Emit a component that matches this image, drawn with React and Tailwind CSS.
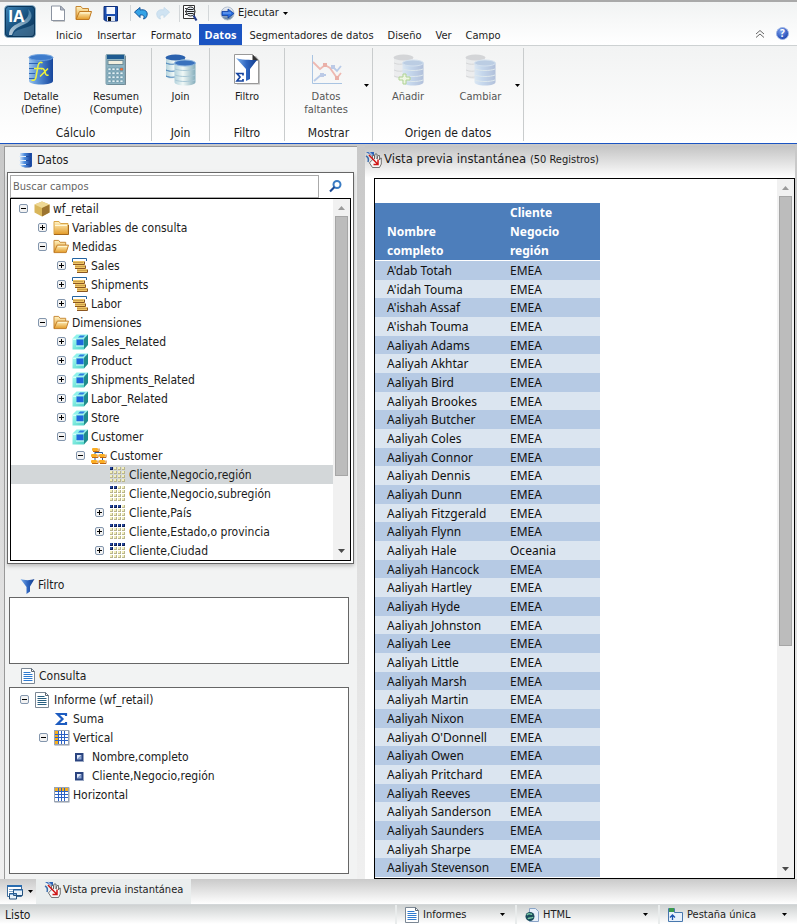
import React from "react";

/* ---------- drawings ---------- */

function Defs() {
  return (
    <svg width="0" height="0" className="absolute" aria-hidden="true">
      <defs>
        <linearGradient id="logo" x1="0" y1="0" x2="1" y2="1">
          <stop offset="0" stopColor="#3f86b8" />
          <stop offset="0.5" stopColor="#17517f" />
          <stop offset="1" stopColor="#0a2f52" />
        </linearGradient>
        <linearGradient id="swoosh" x1="0" y1="1" x2="1" y2="0">
          <stop offset="0" stopColor="#e4edf3" />
          <stop offset="1" stopColor="#4d86ad" />
        </linearGradient>
        <linearGradient id="cylBlue">
          <stop offset="0" stopColor="#9cc3ea" />
          <stop offset="0.35" stopColor="#5a93d8" />
          <stop offset="1" stopColor="#17469c" />
        </linearGradient>
        <linearGradient id="cylPale">
          <stop offset="0" stopColor="#b4d3dd" />
          <stop offset="0.4" stopColor="#f0f8f6" />
          <stop offset="1" stopColor="#84adbb" />
        </linearGradient>
        <linearGradient id="folder" x1="0" y1="0" x2="0" y2="1">
          <stop offset="0" stopColor="#fff3c4" />
          <stop offset="1" stopColor="#e39a26" />
        </linearGradient>
        <linearGradient id="funnel">
          <stop offset="0" stopColor="#7fb0ea" />
          <stop offset="0.5" stopColor="#2f66c0" />
          <stop offset="1" stopColor="#123c8c" />
        </linearGradient>
        <linearGradient id="dbSide">
          <stop offset="0" stopColor="#cfe2f8" />
          <stop offset="0.4" stopColor="#4f8fe0" />
          <stop offset="1" stopColor="#163f98" />
        </linearGradient>
        <linearGradient id="cyan" x1="0" y1="0" x2="1" y2="1">
          <stop offset="0" stopColor="#a4fbf0" />
          <stop offset="1" stopColor="#4fd3c8" />
        </linearGradient>
        <radialGradient id="ball" cx="0.4" cy="0.3" r="0.8">
          <stop offset="0" stopColor="#7da2ee" />
          <stop offset="1" stopColor="#0c36a8" />
        </radialGradient>
        <linearGradient id="silver" x1="0" y1="0" x2="0" y2="1">
          <stop offset="0" stopColor="#f2f4f8" />
          <stop offset="0.5" stopColor="#b9c6d8" />
          <stop offset="1" stopColor="#4f7396" />
        </linearGradient>
      </defs>
    </svg>
  );
}

function Svg({ w = 16, h = 16, box, className = "", children }) {
  return (
    <svg width={w} height={h} viewBox={box || `0 0 ${w} ${h}`} className={"shrink-0 " + className} fill="none" aria-hidden="true">
      {children}
    </svg>
  );
}

const Caret = ({ className = "" }) => (
  <Svg w={5} h={3} className={className}>
    <path d="M0 0h5L2.5 3z" fill="#000" />
  </Svg>
);

const Logo = () => (
  <Svg w={32} h={33}>
    <rect x="0.5" y="0.5" width="31" height="32" rx="4" fill="url(#logo)" stroke="#8fb1c8" />
    <rect x="1.5" y="1.5" width="29" height="30" rx="3" stroke="#0b3558" />
    <path d="M24 4c6 5 4 12-3 15-6 3-11 4-13 11H5c0-8 6-10 12-13 7-3 9-8 7-13z" fill="url(#swoosh)" opacity="0.8" />
    <path d="M9 30c2-7 11-5 21-11v8c0 3-1 4-3 4H9z" fill="#5f8fb2" opacity="0.5" />
    <text x="4" y="17" fontFamily="Open Sans" fontSize="16" fontWeight="700" fill="#fff">IA</text>
  </Svg>
);

const NewDoc = () => (
  <Svg w={16} h={17}>
    <path d="M3 2h8l4 4v11H3z" fill="#9a9a9a" opacity="0.5" />
    <path d="M1.5 1h9l4 4v10.500h-13z" fill="#fff" stroke="#8b93a0" />
    <path d="M10.500 1v4h4z" fill="#b5bccb" stroke="#8b93a0" />
  </Svg>
);

const OpenFolder = ({ w = 17, h = 16 }) => (
  <Svg w={w} h={h} box="0 0 17 16">
    <path d="M1 14V1.500h5l1.500 2h6V7" fill="url(#folder)" stroke="#c58632" />
    <path d="M1 14.500 4.500 6.500h12L14 14.500z" fill="url(#folder)" stroke="#c07a22" />
    <path d="M5.500 8h9.500" stroke="#fff5d0" />
  </Svg>
);

const ClosedFolder = () => (
  <Svg>
    <path d="M1 3V1.500h5l1.500 2H15v11H1z" fill="url(#folder)" stroke="#d9a548" />
    <path d="M2 5.500h12" stroke="#fff8d8" />
    <path d="M1 14.500h14.500V5" stroke="#a5671a" />
  </Svg>
);

const Save = () => (
  <Svg w={16} h={17}>
    <path d="M1 1.500h13.500V16H2.500L1 14.500z" fill="#1c4fb0" stroke="#0e2f7a" />
    <rect x="3.500" y="2" width="8.500" height="7" fill="#f4f8ff" />
    <rect x="4" y="11" width="8" height="5" fill="#dbe3ef" />
    <rect x="5" y="12" width="3" height="4" fill="#111" />
  </Svg>
);

const Undo = ({ pale, flip }) => (
  <Svg w={14} h={14} className={flip ? "-scale-x-100" : ""}>
    <path
      d="M0.500 6 6 1.500v2.500c5-1 8 1.500 7 5.500-.5 2-1.500 3-3.500 3.500 1.300-2.500.5-4.500-3.500-4v2.500z"
      fill={pale ? "#cfe3f2" : "#35a3e6"}
      stroke={pale ? "#c6dcec" : "#12549a"}
    />
  </Svg>
);

const Preview = () => (
  <Svg w={16} h={17}>
    <path d="M1.500 0.500h11v13h-11z" fill="#fff" stroke="#333" />
    <path d="M3 3.500h3M3 6.500h2M3 9.500h3" stroke="#333" />
    <circle cx="8.500" cy="6.500" r="4.500" fill="#e6eff6" stroke="#222" />
    <path d="M5.500 4.500h6M4.500 6.500h8M5.500 8.500h6" stroke="#222" />
    <path d="m11.500 10.500 3 5" stroke="#223d8c" strokeWidth="2.200" />
  </Svg>
);

const Run = () => (
  <Svg w={15} h={15}>
    <circle cx="7.500" cy="7.500" r="6.500" fill="url(#silver)" stroke="#b4c0d0" />
    <path d="M2 5.500h6V3l6 4.500L8 12V9.500H2z" fill="#2a6fe0" stroke="#0d3c9e" strokeWidth="0.8" />
    <path d="M3 7h8" stroke="#7fadf3" />
  </Svg>
);

const Define = () => (
  <Svg w={26} h={31}>
    <path d="M1 4v23c0 2 5 3.500 12 3.500S25 29 25 27V4z" fill="url(#cylBlue)" />
    <ellipse cx="13" cy="3.500" rx="12" ry="3" fill="#3e7ccc" stroke="#6ca0dd" />
    <path d="M1 9.500h9M1 14.500h7M1 19.500h6M1 24.500h6" stroke="#2f64b4" />
    <path d="M14.500 9c-2-1.500-4-.5-4.500 3L8 23c-.5 2.500-2 4-4.500 3M6 14.500h8" stroke="#eef23c" strokeWidth="1.500" />
    <path d="M13 15c2.500-1.500 3.500 1 4 3s1 4 3.500 3M20 14.500l-8 8" stroke="#eef23c" strokeWidth="1.500" />
  </Svg>
);

const Calculator = () => (
  <Svg w={22} h={31}>
    <rect x="1" y="0.500" width="19" height="30" rx="1" fill="#8eb4c3" stroke="#7c9dab" />
    <path d="M20.500 2v29H3" stroke="#49606c" opacity="0.600" />
    <rect x="2" y="1" width="17" height="4" fill="#1f5b91" />
    <rect x="3" y="6.500" width="15" height="4" fill="#f1efdf" stroke="#6e8b97" />
    {[14, 18, 22, 26].map((y) =>
      [3, 7, 11, 15].map((x) => (
        <rect key={x + "-" + y} x={x} y={y} width="3" height="2.500" fill={x === 15 && y === 14 ? "#ff6a2b" : "#e3f1f5"} stroke="#4f7f95" strokeWidth="0.500" />
      ))
    )}
  </Svg>
);

const Join = ({ faded, plus }) => (
  <Svg w={31} h={32}>
    <g opacity={faded ? 0.3 : 1}>
      <path d="M1 4v18c0 2 4 3 9 3s10-1 10-3V4z" fill={faded ? "#d6d8dc" : "url(#cylPale)"} />
      <ellipse cx="10.500" cy="3.500" rx="10" ry="3" fill={faded ? "#8d8f96" : "#2c62ae"} />
      <path d="M1 9c4 2 8 1 9 1M1 16c4 2 8 1 9 1M1 22c4 2 8 1 9 1" stroke={faded ? "#909398" : "#3776b4"} />
      <path d="M9.500 9v19c0 2 4 3.500 10.500 3.500S30.500 30 30.500 28V9z" fill={faded ? "url(#cylBlue)" : "url(#cylPale)"} />
      <ellipse cx="20" cy="9" rx="10.500" ry="3" fill="#3a72bd" stroke="#8db5de" />
      <path d="M10 15c5 2 15 2 20 0M10 21c5 2 15 2 20 0M10 26c5 2 15 2 20 0" stroke="#a9c8d6" />
    </g>
    {plus && <path d="M10 20h3v3h4v3h-4v4h-3v-4H6v-3h4z" fill="#eef6e4" stroke="#b0d492" />}
  </Svg>
);

const FilterDoc = () => (
  <Svg w={27} h={31}>
    <path d="M3 2h19l4 5v23.500H3z" fill="#9a9a9a" opacity="0.600" />
    <path d="M0.500 0.500h18l6 6v23h-24z" fill="#fff" stroke="#999" />
    <path d="M18.500 0.500v6h6z" fill="#333" />
    <path d="M2 4c3 2 18 2 21 2l-7 9v10l-4 2V15z" fill="url(#funnel)" />
    <path d="M9 21.500v-2H3L6 23l-3 4h6v-2" stroke="#1745a0" strokeWidth="1.700" />
  </Svg>
);

const MissingData = () => (
  <Svg w={31} h={31}>
    <path d="M1.500 1v28.500H31" stroke="#a9c4e2" />
    <path d="m2 8 7 7 5-4 5 3 7 10 4-5" stroke="#eeb9b2" strokeWidth="1.800" />
    <path d="m3 27 7-6h5M21 12l5 5 4-5" stroke="#b9cbe8" strokeWidth="1.800" />
    <path d="M12 9h4v4h-4zM24 22h4v4h-4z" fill="#eab0a8" />
    <path d="M9 19h4v4H9zM20 11h4v4h-4z" fill="#bccae6" />
  </Svg>
);

const Help = () => (
  <Svg w={13} h={13}>
    <circle cx="6.500" cy="6.500" r="6" fill="url(#ball)" stroke="#9db4e4" />
    <text x="4" y="10" fontFamily="Open Sans" fontSize="10" fontWeight="700" fill="#fff">?</text>
  </Svg>
);

const DbSmall = () => (
  <Svg w={14} h={16}>
    <path d="M3 1v13c1 2 10 2 10 0V1z" fill="#1d4ea6" />
    <path d="M1 1h11v3H1zM1 5h11v3H1zM1 9h11v3H1z" fill="url(#dbSide)" />
    <path d="M1 13h11v2H3z" fill="url(#dbSide)" />
    <path d="M0 4.500h7M0 8.500h7M0 12.500h7" stroke="#e4eef9" />
  </Svg>
);

const FunnelSmall = () => (
  <Svg w={15} h={16}>
    <path d="M0.500 1c4 1.500 10 1.500 14 0L10 8.500v5L6.500 16V9z" fill="url(#funnel)" />
  </Svg>
);

const DocLines = ({ color = "#2f7bd0" }) => (
  <Svg w={14} h={16}>
    <path d="M0.500 0.500h10l3 3v12h-13z" fill="#fff" stroke="#7b8794" />
    <path d="M10.500 0.500v3h3" stroke="#5a6672" />
    <path d="M2.500 4.500h7M2.500 6.500h9M2.500 8.500h9M2.500 10.500h9M2.500 12.500h9" stroke={color} />
  </Svg>
);

const Box = () => (
  <Svg>
    <path d="m8 0.500 7.500 3v8L8 15.500l-7.500-4v-8z" fill="#d9b65a" />
    <path d="m8 0.500 7.500 3L8 7 0.500 3.500z" fill="#eed894" />
    <path d="M15.500 3.500 8 7v8.500l7.500-4z" fill="#9c7430" />
  </Svg>
);

const Measure = () => (
  <Svg>
    <path d="M0.500 4V0.500h14V3" stroke="#2363a0" />
    <path d="M1 3h11v4H1zM3 7h10v4H3zM5 11h10v4H5z" fill="#f0c766" />
    <path d="M1 6.500h11.500v-3M3 10.500h10.500v-3M5 14.500h10.500v-3" stroke="#8a5520" />
    <path d="M1.500 4.500h9M3.500 8.500h9M5.500 12.500h9" stroke="#a87830" strokeDasharray="1 1" />
  </Svg>
);

const Cube = () => (
  <Svg>
    <path d="M0.500 4.500 4.500 0.500H16l-4 4z" fill="#8ff3ea" />
    <path d="m12 4.500 4-4v10.500l-4 4.500z" fill="#1f8d8c" />
    <path d="M0.500 4.500H12v11H0.500z" fill="url(#cyan)" />
    <path d="M4.500 5.500h7v6h-7z" fill="#1f66dc" />
    <path d="m6 3.500 2-2h5l-2 2z" fill="#2f7be2" />
    <path d="M1 5.500h3M4 12h8" stroke="#d5fffa" />
  </Svg>
);

const Hierarchy = () => (
  <Svg>
    <path d="M4 3v10M4 4.500h7.500V13" stroke="#27569b" />
    {[[1, 0], [0, 6], [8, 6], [0, 12], [8, 12]].map(([x, y]) => (
      <g key={x + "-" + y}>
        <rect x={x} y={y} width="6" height="3" rx="1" fill="#fbae24" />
        <path d={`M${x + 1} ${y + 3.5}h6v-3`} stroke="#c4680f" />
      </g>
    ))}
  </Svg>
);

const Dots = ({ on }) => (
  <Svg>
    {[0, 4, 8, 12].map((y, r) =>
      [0, 4, 8, 12].map((x, c) => {
        const dark = r * 4 + c < on;
        return (
          <g key={x + "-" + y}>
            <rect x={x} y={y} width="3" height="3" fill={dark ? "#0c1f57" : "#b9b58c"} />
            <rect x={x} y={y} width="2" height="2" fill={dark ? "#27489e" : "#f3f0bd"} />
          </g>
        );
      })
    )}
  </Svg>
);

const Sigma = () => (
  <Svg>
    <path d="M12 5V3H3.500l5 5-5 5H12v-2" stroke="#1d5cc0" strokeWidth="2.200" />
  </Svg>
);

const Grid = ({ side }) => (
  <Svg>
    <rect x="0.500" y="0.500" width="15" height="15" fill="#8f99a8" />
    <rect x="0.500" y="0.500" width="14" height="14" fill="#fff" stroke="#9aa4b4" />
    <path d="M4.500 1v13M7.500 1v13M10.500 1v13M1 4.500h13M1 7.500h13M1 10.500h13" stroke="#2c61c4" />
    <path d={side ? "M1 1h3v3H1zM1 5h3v2H1zM1 8h3v2H1zM1 11h3v3H1z" : "M1 1h3v3H1zM5 1h2v3H5zM8 1h2v3H8zM11 1h3v3h-3z"} fill="#f5ae1d" />
  </Svg>
);

const Bullet = () => (
  <Svg>
    <rect x="2" y="4" width="9" height="9" fill="#98a6c2" />
    <rect x="2" y="4" width="8" height="8" fill="#2b4480" />
    <path d="M4 6h4.500L4 10.500z" fill="#e0e9f8" />
    <path d="M8.500 6v4.500H4z" fill="#8ba3d2" />
  </Svg>
);

const HandPreview = () => (
  <Svg w={17} h={17}>
    <path d="M1 1h8v5z" fill="#2b62b8" />
    <path d="M4 1 9 6" stroke="#9fb9dc" strokeWidth="1.500" />
    <path d="M1 5c2 1 3 3 2 6" stroke="#3a6cab" strokeWidth="1.500" />
    <path d="M7.500 9V4.500h2V8l.500-5h2v5l1-3.500h1.500V9l1-2h.800v6L14.500 16.500h-7L4.500 12l1-1.500z" fill="#f7f7f7" stroke="#555" strokeWidth="0.800" />
    <path d="m4 4 8.500 9M13 8.500v5H8.500" stroke="#cf1616" strokeWidth="1.500" />
  </Svg>
);

const Windows = () => (
  <Svg w={16} h={16}>
    <path d="M0.500 1.500h14v11h-14z" fill="#fff" stroke="#3d6c9b" />
    <path d="M0 2h15" stroke="#2a6db0" strokeWidth="2" />
    <path d="M2 5.500h5M2 7.500h5" stroke="#7ea3c8" />
    <path d="M6.500 5.500h9v6h-9zM2.500 9.500h7v5.500h-7z" fill="#e8f2fb" stroke="#24507c" />
    <path d="M6 6h10M2 10h8" stroke="#2a6db0" />
  </Svg>
);

const HtmlDoc = () => (
  <Svg w={14} h={16}>
    <path d="M4.500 1.500h6l3 3v10h-9z" fill="#e7effa" stroke="#8aa5c8" />
    <circle cx="5" cy="9.500" r="4.500" fill="#1a4b5c" />
    <path d="M2 8c2-3 3 0 5-1M3 12c1-2 4 0 5-2" stroke="#78c8a4" strokeWidth="1.500" />
  </Svg>
);

const TabDoc = () => (
  <Svg w={15} h={15}>
    <path d="M0.500 14.500v-13h6v4h8v9z" fill="#e7f0fb" stroke="#4878ae" />
    <path d="M1 1h5v4H1z" fill="#3b9a4c" />
    <path d="M4.500 13V8M2 10.500 4.500 8 7 10.500" stroke="#1d55b0" strokeWidth="1.300" />
  </Svg>
);

const SearchIcon = () => (
  <Svg w={13} h={13}>
    <circle cx="8" cy="4.500" r="3.500" stroke="#3a7cc4" strokeWidth="2" />
    <path d="M5.500 7 1 11.500" stroke="#1c4a96" strokeWidth="2.200" />
  </Svg>
);

/* ---------- pieces ---------- */

function Expander({ state }) {
  if (!state) return <span className="w-[10px] shrink-0" />;
  return (
    <button type="button" aria-label={state === "open" ? "Contraer" : "Expandir"} className="w-[10px] h-[10px] shrink-0">
      <Svg w={9} h={9}>
        <rect x="0.500" y="0.500" width="8" height="8" rx="1.500" fill="#f2f2f2" stroke="#8396ad" />
        <path d={state === "open" ? "M2 4.500h5" : "M2 4.500h5M4.500 2v5"} stroke="#000" />
      </Svg>
    </button>
  );
}

const indent = ["pl-[8px]", "pl-[27px]", "pl-[46px]", "pl-[65px]", "pl-[84px]"];

function TreeRow({ level, state, icon, text, selected }) {
  return (
    <li className={`flex h-[19px] items-center ${indent[level]} ${selected ? "bg-[#d3d7d9]" : ""}`}>
      <Expander state={state} />
      <span className="ml-[5px] mr-[3px] flex w-[16px] shrink-0">{icon}</span>
      <span className="whitespace-nowrap">{text}</span>
    </li>
  );
}

function ScrollBar({ thumb }) {
  return (
    <div className="flex w-[17px] shrink-0 flex-col items-center justify-between bg-[#f1f1f1] px-[2px] py-[7px]">
      <Svg w={7} h={4}><path d="M0 4h7L3.500 0z" fill="#9a9a9a" /></Svg>
      <div className="mt-[6px] flex w-full flex-1 flex-col">
        <div className={`border border-[#a6a6a6] bg-[#bcbcbc] ${thumb}`} />
      </div>
      <Svg w={7} h={4}><path d="M0 0h7L3.500 4z" fill="#4a4a4a" /></Svg>
    </div>
  );
}

function RibbonButton({ icon, lines, disabled, caret, width }) {
  return (
    <div className={`flex shrink-0 ${width}`}>
      <button type="button" disabled={disabled} className={`flex flex-1 flex-col items-center text-[11px] ${disabled ? "text-[#555]" : ""}`}>
        <span className="flex h-[36px] items-start">{icon}</span>
        {lines.map((l) => (
          <span key={l} className="leading-[13px] whitespace-nowrap">{l}</span>
        ))}
      </button>
      {caret && (
        <button type="button" aria-label="Más opciones" className="mt-[30px] flex h-[4px] w-[8px] justify-end">
          <Caret />
        </button>
      )}
    </div>
  );
}

function RibbonGroup({ title, width, children }) {
  return (
    <section className={`flex shrink-0 flex-col justify-between border-r border-[#c9cccd] ${width}`}>
      <div className="flex pt-[6px]">{children}</div>
      <h2 className="text-center leading-[16px]">{title}</h2>
    </section>
  );
}

function StatusSelect({ icon, value, label, width }) {
  return (
    <label className={`relative flex h-full shrink-0 items-center gap-[4px] border-l-2 border-[#e9ecec] pl-[8px] ${width}`}>
      {icon}
      <select aria-label={label} className="h-full w-full appearance-none bg-transparent text-[11px] leading-[16px] outline-none">
        <option>{value}</option>
      </select>
      <Caret className="pointer-events-none absolute right-[10px]" />
    </label>
  );
}

/* ---------- data ---------- */

const fields = [
  { level: 0, state: "open", icon: <Box />, text: "wf_retail" },
  { level: 1, state: "closed", icon: <ClosedFolder />, text: "Variables de consulta" },
  { level: 1, state: "open", icon: <OpenFolder w={16} h={15} />, text: "Medidas" },
  { level: 2, state: "closed", icon: <Measure />, text: "Sales" },
  { level: 2, state: "closed", icon: <Measure />, text: "Shipments" },
  { level: 2, state: "closed", icon: <Measure />, text: "Labor" },
  { level: 1, state: "open", icon: <OpenFolder w={16} h={15} />, text: "Dimensiones" },
  { level: 2, state: "closed", icon: <Cube />, text: "Sales_Related" },
  { level: 2, state: "closed", icon: <Cube />, text: "Product" },
  { level: 2, state: "closed", icon: <Cube />, text: "Shipments_Related" },
  { level: 2, state: "closed", icon: <Cube />, text: "Labor_Related" },
  { level: 2, state: "closed", icon: <Cube />, text: "Store" },
  { level: 2, state: "open", icon: <Cube />, text: "Customer" },
  { level: 3, state: "open", icon: <Hierarchy />, text: "Customer" },
  { level: 4, icon: <Dots on={1} />, text: "Cliente,Negocio,región", selected: true },
  { level: 4, icon: <Dots on={2} />, text: "Cliente,Negocio,subregión" },
  { level: 4, state: "closed", icon: <Dots on={3} />, text: "Cliente,País" },
  { level: 4, state: "closed", icon: <Dots on={4} />, text: "Cliente,Estado,o provincia" },
  { level: 4, state: "closed", icon: <Dots on={5} />, text: "Cliente,Ciudad" },
];

const query = [
  { level: 0, state: "open", icon: <DocLines color="#285f80" />, text: "Informe (wf_retail)" },
  { level: 1, icon: <Sigma />, text: "Suma" },
  { level: 1, state: "open", icon: <Grid side />, text: "Vertical" },
  { level: 2, icon: <Bullet />, text: "Nombre,completo" },
  { level: 2, icon: <Bullet />, text: "Cliente,Negocio,región" },
  { level: 1, icon: <Grid />, text: "Horizontal" },
];

const people = [
  "A'dab Totah", "A'idah Touma", "A'ishah Assaf", "A'ishah Touma", "Aaliyah Adams", "Aaliyah Akhtar",
  "Aaliyah Bird", "Aaliyah Brookes", "Aaliyah Butcher", "Aaliyah Coles", "Aaliyah Connor", "Aaliyah Dennis",
  "Aaliyah Dunn", "Aaliyah Fitzgerald", "Aaliyah Flynn", "Aaliyah Hale", "Aaliyah Hancock", "Aaliyah Hartley",
  "Aaliyah Hyde", "Aaliyah Johnston", "Aaliyah Lee", "Aaliyah Little", "Aaliyah Marsh", "Aaliyah Martin",
  "Aaliyah Nixon", "Aaliyah O'Donnell", "Aaliyah Owen", "Aaliyah Pritchard", "Aaliyah Reeves",
  "Aaliyah Sanderson", "Aaliyah Saunders", "Aaliyah Sharpe", "Aaliyah Stevenson",
];

const tabs = ["Inicio", "Insertar", "Formato", "Datos", "Segmentadores de datos", "Diseño", "Ver", "Campo"];

/* ---------- page ---------- */

function Header() {
  return (
    <header className="flex h-[46px] border-t-2 border-b border-t-[#a9a9a9] border-b-[#cdd1d2] bg-linear-to-b from-[#f1f3f3] to-white">
      <button type="button" aria-label="Menú" className="ml-[4px] mt-[3px] h-[33px] w-[32px] shrink-0"><Logo /></button>
      <div className="flex flex-1 flex-col">
        <div className="flex h-[22px] items-center pl-[14px]">
          <button type="button" aria-label="Nuevo" className="w-[25px]"><NewDoc /></button>
          <button type="button" aria-label="Abrir" className="w-[28px]"><OpenFolder /></button>
          <button type="button" aria-label="Guardar" className="w-[27px]"><Save /></button>
          <button type="button" aria-label="Deshacer" className="flex w-[26px] border-l border-[#d3d7d9] py-[1px] pl-[3px]"><Undo /></button>
          <button type="button" aria-label="Rehacer" className="w-[23px]"><Undo pale flip /></button>
          <button type="button" aria-label="Vista previa" className="flex w-[29px] border-l border-[#d3d7d9] pl-[2px]"><Preview /></button>
          <button type="button" className="flex items-center border-l border-[#d3d7d9] pl-[11px] text-[11px]">
            <Run /><span className="ml-[3px] mr-[4px]">Ejecutar</span><Caret />
          </button>
        </div>
        <nav className="flex flex-1 pl-[12px] text-[11px]">
          {tabs.map((t) => (
            <button
              key={t}
              type="button"
              className={t === "Datos" ? "bg-[#1b54c2] px-[6px] font-['Open_Sans','Noto_Sans',sans-serif] leading-[21px] font-bold text-white" : "px-[7px] pt-[3px] leading-[18px] first:pl-[8px] nth-2:px-[8px]"}
            >
              {t}
            </button>
          ))}
        </nav>
      </div>
      <div className="flex items-end gap-[11px] pb-[5px] pr-[8px]">
        <button type="button" aria-label="Contraer cinta" className="mb-[2px]">
          <Svg w={10} h={8}><path d="m1 4 4-3.500L9 4M1 7.500 5 4l4 3.500" stroke="#666" /></Svg>
        </button>
        <button type="button" aria-label="Ayuda"><Help /></button>
      </div>
    </header>
  );
}

function Ribbon() {
  return (
    <div className="flex h-[98px] border-b border-[#1b54c2] bg-linear-to-b from-[#f2f3f3] to-white pb-[2px] pt-[2px]">
      <RibbonGroup title="Cálculo" width="w-[152px]">
        <RibbonButton width="w-[82px]" icon={<Define />} lines={["Detalle", "(Define)"]} />
        <RibbonButton width="w-[68px]" icon={<Calculator />} lines={["Resumen", "(Compute)"]} />
      </RibbonGroup>
      <RibbonGroup title="Join" width="w-[58px]">
        <RibbonButton width="w-full" icon={<Join />} lines={["Join"]} />
      </RibbonGroup>
      <RibbonGroup title="Filtro" width="w-[75px]">
        <RibbonButton width="w-full" icon={<FilterDoc />} lines={["Filtro"]} />
      </RibbonGroup>
      <RibbonGroup title="Mostrar" width="w-[88px]">
        <div className="w-[6px]" />
        <RibbonButton width="w-[78px]" icon={<MissingData />} lines={["Datos", "faltantes"]} disabled caret />
      </RibbonGroup>
      <RibbonGroup title="Origen de datos" width="w-[151px]">
        <RibbonButton width="w-[70px]" icon={<Join faded plus />} lines={["Añadir"]} disabled />
        <div className="w-[6px]" />
        <RibbonButton width="w-[71px]" icon={<Join faded />} lines={["Cambiar"]} disabled caret />
      </RibbonGroup>
    </div>
  );
}

function FieldsPanel() {
  return (
    <aside className="flex w-[353px] shrink-0 flex-col border-l border-t border-[#999] bg-[#f2f3f3] pl-[2px]">
      <h2 className="flex h-[25px] items-center gap-[4px] pl-[12px]"><DbSmall />Datos</h2>
      <div className="mr-[3px] border border-[#666] bg-white p-[2px] shadow-[0_2px_4px_#bbb]">
        <div className="flex">
          <input aria-label="Buscar campos" placeholder="Buscar campos" className="h-[23px] min-w-0 flex-1 border border-[#aaa] px-[2px] text-[11px] outline-none placeholder:text-[#666]" />
          <button type="button" aria-label="Buscar" className="flex w-[32px] items-center justify-center"><SearchIcon /></button>
        </div>
        <div className="flex border border-black">
          <ul className="min-w-0 flex-1 overflow-hidden">
            {fields.map((f, i) => <TreeRow key={i} {...f} />)}
          </ul>
          <ScrollBar thumb="h-[260px]" />
        </div>
      </div>
      <h2 className="flex h-[33px] items-end gap-[3px] pb-[3px] pl-[13px] leading-[18px]"><FunnelSmall />Filtro</h2>
      <div className="ml-[2px] mr-[8px] h-[67px] border border-[#666] bg-white" />
      <h2 className="flex h-[23px] items-center gap-[4px] pl-[14px]"><DocLines />Consulta</h2>
      <ul className="mb-[5px] ml-[2px] mr-[8px] min-h-[187px] flex-1 border border-[#666] bg-white py-[2px] pl-[2px]">
        {query.map((f, i) => <TreeRow key={i} {...f} />)}
      </ul>
    </aside>
  );
}

function PreviewPanel() {
  return (
    <main className="mr-[2px] flex min-w-0 flex-1 flex-col bg-white">
      <h1 className="flex h-[32px] items-center gap-[2px] bg-linear-to-b from-[#c4c4c4] to-white pb-[6px] text-[13px]">
        <HandPreview />
        <span>Vista previa instantánea <small className="text-[11px]">(50 Registros)</small></span>
      </h1>
      <div className="ml-[9px] flex flex-1 border border-black">
        <div className="flex-1 pt-[24px]">
          <table className="w-[225px] table-fixed border-collapse text-left font-['Noto_Sans','Open_Sans',sans-serif] text-[12px] text-[#111]">
            <thead>
              <tr className="border-b border-white bg-[#4d7ebb] align-bottom leading-[19px] text-white">
                <th className="w-[123px] pl-[12px]">Nombre<br />completo</th>
                <th className="pl-[12px]">Cliente<br />Negocio<br />región</th>
              </tr>
            </thead>
            <tbody>
              {people.map((p) => (
                <tr key={p} className="h-[19px] leading-[16px] odd:bg-[#b6cae4] even:bg-[#dbe5f0] nth-[3n+2]:h-[18px]">
                  <td className="pt-[2px] pl-[12px]">{p}</td>
                  <td className="pt-[2px] pl-[12px]">{p === "Aaliyah Hale" ? "Oceania" : "EMEA"}</td>
                </tr>
              ))}
            </tbody>
          </table>
        </div>
        <ScrollBar thumb="h-[450px]" />
      </div>
    </main>
  );
}

export default function App() {
  return (
    <div className="flex min-h-screen flex-col overflow-hidden bg-[#e6e6e6] font-['DejaVu_Sans_Condensed','Open_Sans',sans-serif] text-[12px] leading-[16px] text-[#1c1c1c]">
      <Defs />
      <Header />
      <Ribbon />
      <div className="flex flex-1 bg-linear-to-b from-[#c8c8c8] to-[#f0f0f0] pl-[4px] pt-[2px]">
        <FieldsPanel />
        <div className="w-[8px] shrink-0" />
        <PreviewPanel />
      </div>
      <div className="flex h-[25px] items-center bg-linear-to-b from-[#cacaca] to-white pl-[7px]">
        <button type="button" aria-label="Ventanas" className="flex w-[29px] items-center gap-[5px]"><Windows /><Caret /></button>
        <button type="button" className="flex h-full items-center gap-[2px] bg-[#eaeeee] px-[8px] pb-[4px] text-[11px]"><HandPreview />Vista previa instantánea</button>
      </div>
      <footer className="flex h-[20px] items-center border-t border-[#d3d7d9] bg-linear-to-b from-[#cfd2d2] to-white">
        <span className="flex-1 pl-[5px]">Listo</span>
        <StatusSelect width="w-[120px]" label="Salida" icon={<DocLines />} value="Informes" />
        <StatusSelect width="w-[143px]" label="Formato" icon={<HtmlDoc />} value="HTML" />
        <StatusSelect width="w-[139px]" label="Pestañas" icon={<TabDoc />} value="Pestaña única" />
      </footer>
    </div>
  );
}
